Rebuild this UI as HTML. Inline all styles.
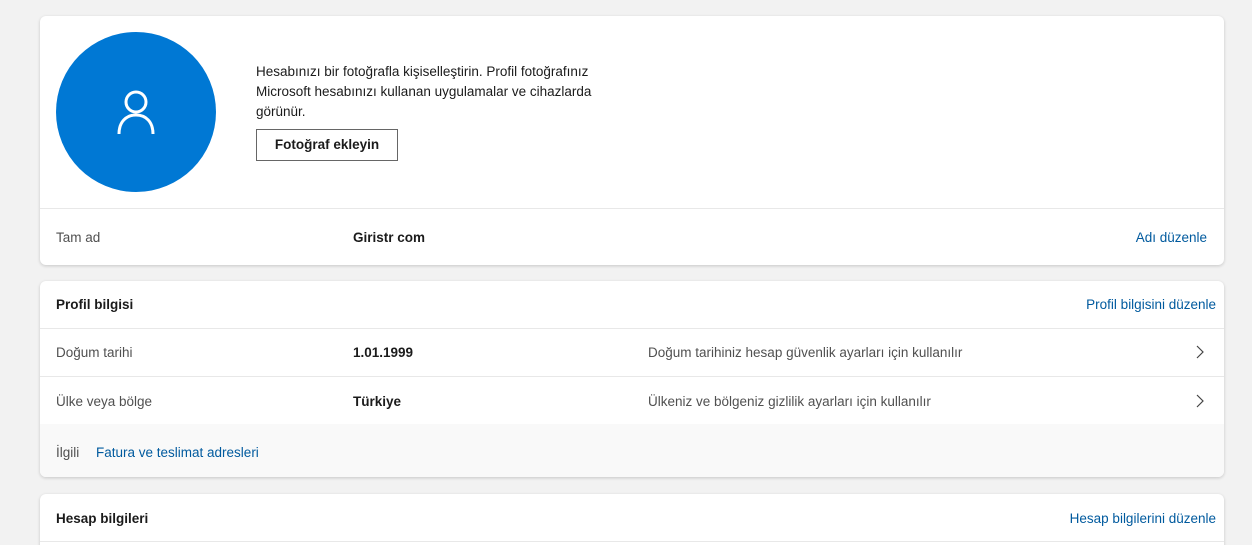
<!DOCTYPE html>
<html style="overflow:hidden;height:545px"><head><meta charset="utf-8"><style>
body{margin:0;width:1252px;height:545px;background:#f2f2f2;font-family:"Liberation Sans",sans-serif;font-size:13.5px;color:#1b1b1b;position:relative;overflow:hidden}
.card{position:absolute;left:40px;width:1184px;background:#fff;border-radius:6px;box-shadow:0 1px 3px rgba(0,0,0,.18);overflow:hidden}
.a{position:absolute;white-space:nowrap}
.l{color:#505050}
.b{font-weight:bold}
.lnk{color:#005a9e}
.hr{position:absolute;left:0;right:0;height:1px;background:#e8e8e8}
</style></head><body>
<div class="card" style="top:16px;height:249px">
  <div style="position:absolute;left:16px;top:16px;width:160px;height:160px;border-radius:50%;background:#0078d4"></div>
  <svg style="position:absolute;left:76px;top:72px" width="40" height="48" viewBox="0 0 40 48"><circle cx="20" cy="14" r="10" fill="none" stroke="#fff" stroke-width="3"/><path d="M3 46 C3 34 10 27 20 27 C30 27 37 34 37 46" fill="none" stroke="#fff" stroke-width="3"/></svg>
  <div class="a" style="left:216px;top:46px;line-height:20px;white-space:normal;width:370px">Hesabınızı bir fotoğrafla kişiselleştirin. Profil fotoğrafınız Microsoft hesabınızı kullanan uygulamalar ve cihazlarda görünür.</div>
  <div style="position:absolute;left:216px;top:113px;width:140px;height:30px;border:1px solid #666;line-height:30px;text-align:center;font-weight:bold">Fotoğraf ekleyin</div>
  <div class="hr" style="top:192px"></div>
  <div class="a l" style="left:16px;top:214px">Tam ad</div>
  <div class="a b" style="left:313px;top:214px">Giristr com</div>
  <div class="a lnk" style="right:17px;top:214px">Adı düzenle</div>
</div>
<div class="card" style="top:281px;height:196px">
  <div class="a b" style="left:16px;top:16px">Profil bilgisi</div>
  <div class="a lnk" style="right:8px;top:16px">Profil bilgisini düzenle</div>
  <div class="hr" style="top:47px"></div>
  <div class="a l" style="left:16px;top:64px">Doğum tarihi</div>
  <div class="a b" style="left:313px;top:64px">1.01.1999</div>
  <div class="a l" style="left:608px;top:64px">Doğum tarihiniz hesap güvenlik ayarları için kullanılır</div>
  <svg class="a" style="left:1155px;top:64px" width="10" height="14"><path d="M2 1l6 6-6 6" fill="none" stroke="#444" stroke-width="1.2"/></svg>
  <div class="hr" style="top:95px"></div>
  <div class="a l" style="left:16px;top:113px">Ülke veya bölge</div>
  <div class="a b" style="left:313px;top:113px">Türkiye</div>
  <div class="a l" style="left:608px;top:113px">Ülkeniz ve bölgeniz gizlilik ayarları için kullanılır</div>
  <svg class="a" style="left:1155px;top:113px" width="10" height="14"><path d="M2 1l6 6-6 6" fill="none" stroke="#444" stroke-width="1.2"/></svg>
  <div style="position:absolute;left:0;right:0;top:143px;bottom:0;background:#f9f9f9"></div>
  <div class="a l" style="left:16px;top:164px">İlgili</div>
  <div class="a lnk" style="left:56px;top:164px">Fatura ve teslimat adresleri</div>
</div>
<div class="card" style="top:494px;height:60px">
  <div class="a b" style="left:16px;top:17px">Hesap bilgileri</div>
  <div class="a lnk" style="right:8px;top:17px">Hesap bilgilerini düzenle</div>
  <div class="hr" style="top:47px"></div>
</div>
</body></html>
